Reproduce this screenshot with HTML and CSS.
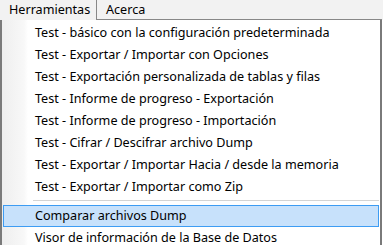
FILE: index.html
```html
<!DOCTYPE html>
<html>
<head>
<meta charset="utf-8">
<link rel="stylesheet" href="styles.css">
</head>
<body>
<div class="bar">
  <div class="tab active">Herramientas</div>
  <div class="tab">Acerca</div>
  <div class="fill"></div>
</div>
<div class="menu">
  <div class="item">Test - básico con la configuración predeterminada</div>
  <div class="item">Test - Exportar / Importar con Opciones</div>
  <div class="item">Test - Exportación personalizada de tablas y filas</div>
  <div class="item">Test - Informe de progreso - Exportación</div>
  <div class="item">Test - Informe de progreso - Importación</div>
  <div class="item">Test - Cifrar / Descifrar archivo Dump</div>
  <div class="item">Test - Exportar / Importar Hacia / desde la memoria</div>
  <div class="item">Test - Exportar / Importar como Zip</div>
  <div class="sep"></div>
  <div class="item hi">Comparar archivos Dump</div>
  <div class="item">Visor de información de la Base de Datos</div>
</div>
</body>
</html>
```
FILE: styles.css
```css
html, body {
  margin: 0;
  padding: 0;
  background: #ffffff;
  width: 383px;
  height: 245px;
  overflow: hidden;
  font-family: "Noto Sans", "Open Sans", sans-serif;
  font-size: 12.6px;
  color: #000;
}
.bar {
  display: flex;
  height: 20px;
  background: #f2f2f2;
}
.tab {
  line-height: 20px;
  padding: 0 9px 0 8px;
  box-sizing: border-box;
  height: 20px;
}
.tab.active {
  width: 97px;
  border-right: 1px solid #888888;
  border-left: 1px solid #f2f2f2;
}
.tab:not(.active) {
  border-bottom: 1px solid #888888;
  padding-left: 9px;
}
.fill {
  flex: 1;
  border-bottom: 1px solid #888888;
  margin-right: 1px;
}
.menu {
  width: 382px;
  height: 225px;
  box-sizing: border-box;
  border-left: 2px solid #7a7a7a;
  border-right: 2px solid #7a7a7a;
  padding: 2px 1px 0 1px;
  background: linear-gradient(to right, #eeeeee 0px, #f8f8f8 22px, #ffffff 26px);
}
.item {
  height: 22px;
  line-height: 22px;
  padding-left: 32px;
  box-sizing: border-box;
  white-space: nowrap;
}
.item.hi {
  background: #c7e1fb;
  border: 1px solid #3d9cf3;
  line-height: 20px;
  padding-left: 31px;
}
.sep {
  height: 5px;
  margin: 0 0 0 30px;
}
.sep::after {
  content: "";
  display: block;
  margin-top: 2px;
  height: 1px;
  background: #d4d4d4;
}
```
